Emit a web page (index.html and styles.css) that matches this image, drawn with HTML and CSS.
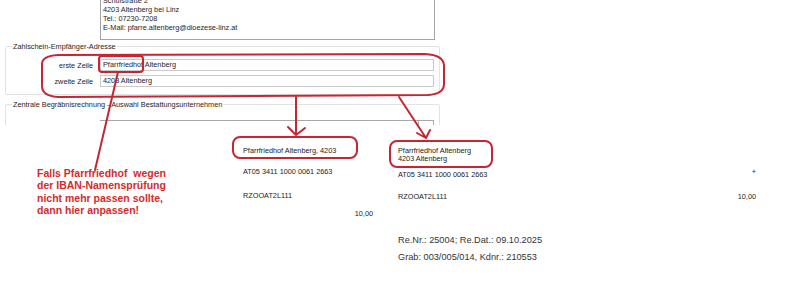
FILE: index.html
```html
<!DOCTYPE html>
<html>
<head>
  <title>Zahlschein-Empfänger-Adresse</title>
  <link rel="stylesheet" href="styles.css">
</head>
<body>
  <section class="dialog">
    <div class="memo">
      <div>Schulstraße 2</div>
      <div>4203 Altenberg bei Linz</div>
      <div>Tel.: 07230-7208</div>
      <div>E-Mail: pfarre.altenberg@dioezese-linz.at</div>
    </div>

    <div class="group">
      <div class="group-title">Zahlschein-Empfänger-Adresse</div>
      <div class="row">
        <label>erste Zeile</label>
        <div class="field">Pfarrfriedhof Altenberg</div>
      </div>
      <div class="row">
        <label>zweite Zeile</label>
        <div class="field">4203 Altenberg</div>
      </div>
    </div>

    <div class="group group-cut">
      <div class="group-title">Zentrale Begräbnisrechnung - Auswahl Bestattungsunternehmen</div>
      <div class="combo"><div class="combo-button"></div></div>
    </div>
  </section>

  <section class="lower">
    <p class="note">Falls Pfarrfriedhof&nbsp; wegen<br>der IBAN-Namensprüfung<br>nicht mehr passen sollte,<br>dann hier anpassen!</p>

    <div class="slip slip-a">
      <div class="payee">Pfarrfriedhof Altenberg, 4203</div>
      <div class="iban">AT05 3411 1000 0061 2663</div>
      <div class="bic">RZOOAT2L111</div>
      <div class="amount">10,00</div>
    </div>

    <div class="slip slip-b">
      <div class="payee">Pfarrfriedhof Altenberg<br>4203 Altenberg</div>
      <div class="line iban-row">
        <span>AT05 3411 1000 0061 2663</span>
        <span class="plus">+</span>
      </div>
      <div class="line bic-row">
        <span>RZOOAT2L111</span>
        <span>10,00</span>
      </div>
      <div class="refs">
        <div>Re.Nr.: 25004; Re.Dat.: 09.10.2025</div>
        <div>Grab: 003/005/014, Kdnr.: 210553</div>
      </div>
    </div>
  </section>

  <!-- red annotations drawn over the screenshot -->
  <svg class="marks" width="800" height="284" viewBox="0 0 800 284">
    <path d="M58 55 L425 54 Q444 55 444 66 L444 84 Q444 94 428 95 L58 97 Q42 96 42 86 L42 64 Q42 56 58 55 Z"/>
    <rect x="99" y="56" width="44" height="16" rx="3"/>
    <path d="M118 72 L95 170"/>
    <path d="M296 97 L296 135 M288 127 L296 135 L305 128"/>
    <path d="M399 97 L426 138 M417 133 L426 138 L430 130"/>
    <rect x="233" y="137" width="124" height="21" rx="7"/>
    <rect x="390" y="141" width="102" height="26" rx="7"/>
  </svg>
</body>
</html>
```

FILE: styles.css
```css
* { box-sizing: border-box; }
body { margin: 0; width: 800px; height: 284px; overflow: hidden; position: relative; background: #fff; color: #1e1e1e; font-family: "Liberation Sans", Arial, sans-serif; }

.dialog { height: 125px; overflow: hidden; font-size: 7.3px; line-height: 9px; }
.memo { margin: -8px 0 0 100px; width: 335px; height: 48px; padding: 2.5px 2px; border: 1px solid #a3a3a3; }
.group { margin: 6px 0 0 5px; width: 435px; padding: 0 5px 7px 0; border: 1px solid #e2e2e2; border-radius: 2px; }
.group-cut { margin-top: 9px; }
.group-title { width: max-content; margin: -5px 0 8px 6px; padding: 0 1px; background: #fff; }
.row { display: flex; align-items: center; gap: 7px; }
.row + .row { margin-top: 4px; }
.row label { width: 87px; text-align: right; }
.field { width: 334px; height: 12px; padding: 0 2px; line-height: 10px; border: 1px solid #cacaca; }
.combo { display: flex; justify-content: flex-end; margin: 11px 0 0 94px; width: 334px; height: 12px; border-top: 1px solid #a8a8a8; border-right: 1px solid #a8a8a8; }
.combo-button { width: 15px; border-left: 1px solid #a8a8a8; }

.lower { display: flex; height: 159px; }
.note { width: 243px; margin: 0; padding: 41.75px 0 0 37px; color: #d42b2b; font-weight: bold; font-size: 10.5px; line-height: 12.5px; }

.slip { font-size: 7.3px; line-height: 9px; color: #222; }
.slip-a { width: 155px; padding-top: 20.5px; }
.slip-a .iban { margin-top: 12.7px; }
.slip-a .bic { margin-top: 15px; }
.slip-a .amount { width: 130px; margin-top: 8.6px; text-align: right; }

.slip-b { width: 358px; padding-top: 21.5px; }
.slip-b .payee { line-height: 8.3px; }
.line { display: flex; justify-content: space-between; }
.iban-row { margin-top: 7.4px; }
.plus { margin-top: -3px; }
.bic-row { margin-top: 12.7px; }
.refs { margin-top: 31px; font-size: 9.2px; line-height: 17px; color: #333; }

.marks { position: absolute; top: 0; left: 0; pointer-events: none; fill: none; stroke: #c62631; stroke-width: 2; stroke-linecap: round; stroke-linejoin: round; }
```
